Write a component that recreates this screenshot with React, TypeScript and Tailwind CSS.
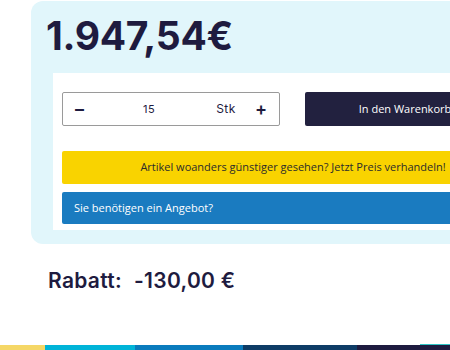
import React from 'react';

const App: React.FC = () => {
  return (
    <div className="w-[450px] h-[350px] overflow-hidden bg-white relative flex flex-col" style={{ fontFamily: 'Inter, "Open Sans", sans-serif' }}>
      {/* Price panel */}
      <div className="ml-[31px] mt-px w-[520px] shrink-0 bg-[#e1f6fb] rounded-[12px] pt-[12px] pb-[14px]">
        <div className="pl-[15px] h-[60px] text-[39px] leading-[46px] font-bold tracking-[-0.3px] text-[#1e1b3f]">
          1.947,54€
        </div>
        <div className="ml-[22px] bg-white px-[9px] pt-[19px] pb-[6px] w-[480px]">
          <div className="flex gap-[25px]">
            <div className="w-[218px] h-[34px] border border-[#9a9a9a] rounded-[2px] flex items-center px-[12px] text-[#1e1b3f]">
              <span className="text-[18px] font-bold leading-none">–</span>
              <span className="ml-[59px] text-[11px] tracking-[0.5px]">15</span>
              <span className="ml-[61px] text-[12px] tracking-[0.5px]">Stk</span>
              <span className="ml-auto text-[18px] font-semibold leading-none">+</span>
            </div>
            <div
              className="w-[200px] h-[34px] bg-[#22213f] rounded-[2px] flex items-center justify-center text-white text-[11px]"
              style={{ fontFamily: '"Open Sans", sans-serif' }}
            >
              In den Warenkorb
            </div>
          </div>
          <div
            className="mt-[25px] h-[33px] bg-[#f9d300] rounded-[2px] flex items-center justify-center text-[11px] text-[#2b2b2b]"
            style={{ fontFamily: '"Open Sans", sans-serif' }}
          >
            Artikel woanders günstiger gesehen? Jetzt Preis verhandeln!
          </div>
          <div
            className="mt-[8px] h-[32px] bg-[#1a7bc0] rounded-[2px] flex items-center px-[12px] text-[11px] text-white"
            style={{ fontFamily: '"Open Sans", sans-serif' }}
          >
            Sie benötigen ein Angebot?
          </div>
        </div>
      </div>

      {/* Discount */}
      <div className="ml-[48px] mt-[21px] text-[21px] font-semibold tracking-[0.3px] text-[#1e1b3f] flex gap-[12px]">
        <span>Rabatt:</span>
        <span>-130,00 €</span>
      </div>

      {/* Color strip */}
      <div className="mt-auto flex h-[5px]">
        <div className="w-[45px] bg-[#f5d766]" />
        <div className="w-[90px] bg-[#00b4d8]" />
        <div className="w-[108px] bg-[#0a7bbd]" />
        <div className="w-[114px] bg-[#0e3c66]" />
        <div className="flex-1 bg-[#1e1b3f]" />
      </div>
      <div className="absolute right-0 bottom-[5px] w-[30px] h-px bg-[#2ec4c4]" />
    </div>
  );
};

export default App;
